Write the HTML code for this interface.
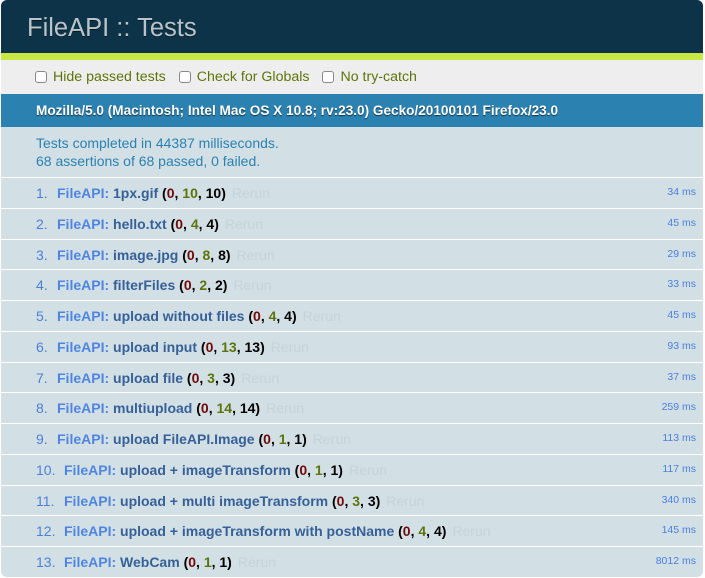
<!DOCTYPE html>
<html><head><style>
html,body{margin:0;padding:0;background:#fff;}
body{font-family:"Liberation Sans",Helvetica,Arial,sans-serif;width:705px;height:578px;overflow:hidden;}
#wrap{position:absolute;left:1px;top:0;width:702px;height:577px;border-radius:6px;overflow:hidden;background:#d2e0e6;}
#hdr{height:53px;background:#0d3349;color:#b9c4ca;font-size:25.5px;line-height:57px;padding-left:26px;text-shadow:0 1px 0 rgba(0,0,0,.5);}
#bar{height:7px;background:#c6e746;}
#tb{height:34px;background:#eee;color:#5e740b;font-size:14.2px;line-height:34px;padding-left:34px;}
#tb span{margin-right:9px;}
#tb i{display:inline-block;width:10px;height:10px;border:1px solid #888;border-radius:3px;background:#fff;vertical-align:-2px;margin-right:6px;}
#ua{height:33px;background:#2b81af;color:#fff;font-size:13.6px;font-weight:bold;line-height:33px;padding-left:35px;text-shadow:0 1px 1px rgba(0,0,0,.6);}
#res{height:50px;color:#2b81af;font-size:14px;padding-left:35px;box-sizing:border-box;line-height:18px;padding-top:7px;}
ol{margin:0;padding:0;list-style:none;}
li{height:29.75px;border-top:1px solid #fff;position:relative;font-size:14px;line-height:30px;color:#366097;font-weight:bold;}
li .n{position:absolute;left:35px;font-weight:normal;color:#4d7fd6;font-size:14px;}
li .t{position:absolute;left:56px;}
li.w .t{left:63px;}
.m{color:#4f85e0;}
.f{color:#710909;}.p{color:#5e740b;}.tot{color:#000;}
.r{color:#c6d2d8;font-weight:normal;margin-left:6px;}
.ms{position:absolute;right:7px;top:0;line-height:28px;font-size:10.5px;font-weight:normal;color:#4a7ede;}
</style></head><body>
<div id="wrap">
<div id="hdr">FileAPI :: Tests</div>
<div id="bar"></div>
<div id="tb"><span><i></i>Hide passed tests</span> <span><i></i>Check for Globals</span> <span><i></i>No try-catch</span></div>
<div id="ua">Mozilla/5.0 (Macintosh; Intel Mac OS X 10.8; rv:23.0) Gecko/20100101 Firefox/23.0</div>
<div id="res">Tests completed in 44387 milliseconds.<br>68 assertions of 68 passed, 0 failed.</div>
<ol>
<li><span class="n">1.</span><span class="t"><span class="m">FileAPI:</span> 1px.gif <span class="tot">(<span class="f">0</span>, <span class="p">10</span>, 10)</span><span class="r">Rerun</span></span><span class="ms">34 ms</span></li>
<li><span class="n">2.</span><span class="t"><span class="m">FileAPI:</span> hello.txt <span class="tot">(<span class="f">0</span>, <span class="p">4</span>, 4)</span><span class="r">Rerun</span></span><span class="ms">45 ms</span></li>
<li><span class="n">3.</span><span class="t"><span class="m">FileAPI:</span> image.jpg <span class="tot">(<span class="f">0</span>, <span class="p">8</span>, 8)</span><span class="r">Rerun</span></span><span class="ms">29 ms</span></li>
<li><span class="n">4.</span><span class="t"><span class="m">FileAPI:</span> filterFiles <span class="tot">(<span class="f">0</span>, <span class="p">2</span>, 2)</span><span class="r">Rerun</span></span><span class="ms">33 ms</span></li>
<li><span class="n">5.</span><span class="t"><span class="m">FileAPI:</span> upload without files <span class="tot">(<span class="f">0</span>, <span class="p">4</span>, 4)</span><span class="r">Rerun</span></span><span class="ms">45 ms</span></li>
<li><span class="n">6.</span><span class="t"><span class="m">FileAPI:</span> upload input <span class="tot">(<span class="f">0</span>, <span class="p">13</span>, 13)</span><span class="r">Rerun</span></span><span class="ms">93 ms</span></li>
<li><span class="n">7.</span><span class="t"><span class="m">FileAPI:</span> upload file <span class="tot">(<span class="f">0</span>, <span class="p">3</span>, 3)</span><span class="r">Rerun</span></span><span class="ms">37 ms</span></li>
<li><span class="n">8.</span><span class="t"><span class="m">FileAPI:</span> multiupload <span class="tot">(<span class="f">0</span>, <span class="p">14</span>, 14)</span><span class="r">Rerun</span></span><span class="ms">259 ms</span></li>
<li><span class="n">9.</span><span class="t"><span class="m">FileAPI:</span> upload FileAPI.Image <span class="tot">(<span class="f">0</span>, <span class="p">1</span>, 1)</span><span class="r">Rerun</span></span><span class="ms">113 ms</span></li>
<li class="w"><span class="n">10.</span><span class="t"><span class="m">FileAPI:</span> upload + imageTransform <span class="tot">(<span class="f">0</span>, <span class="p">1</span>, 1)</span><span class="r">Rerun</span></span><span class="ms">117 ms</span></li>
<li class="w"><span class="n">11.</span><span class="t"><span class="m">FileAPI:</span> upload + multi imageTransform <span class="tot">(<span class="f">0</span>, <span class="p">3</span>, 3)</span><span class="r">Rerun</span></span><span class="ms">340 ms</span></li>
<li class="w"><span class="n">12.</span><span class="t"><span class="m">FileAPI:</span> upload + imageTransform with postName <span class="tot">(<span class="f">0</span>, <span class="p">4</span>, 4)</span><span class="r">Rerun</span></span><span class="ms">145 ms</span></li>
<li class="w"><span class="n">13.</span><span class="t"><span class="m">FileAPI:</span> WebCam <span class="tot">(<span class="f">0</span>, <span class="p">1</span>, 1)</span><span class="r">Rerun</span></span><span class="ms">8012 ms</span></li>
</ol>
</div>
</body></html>
